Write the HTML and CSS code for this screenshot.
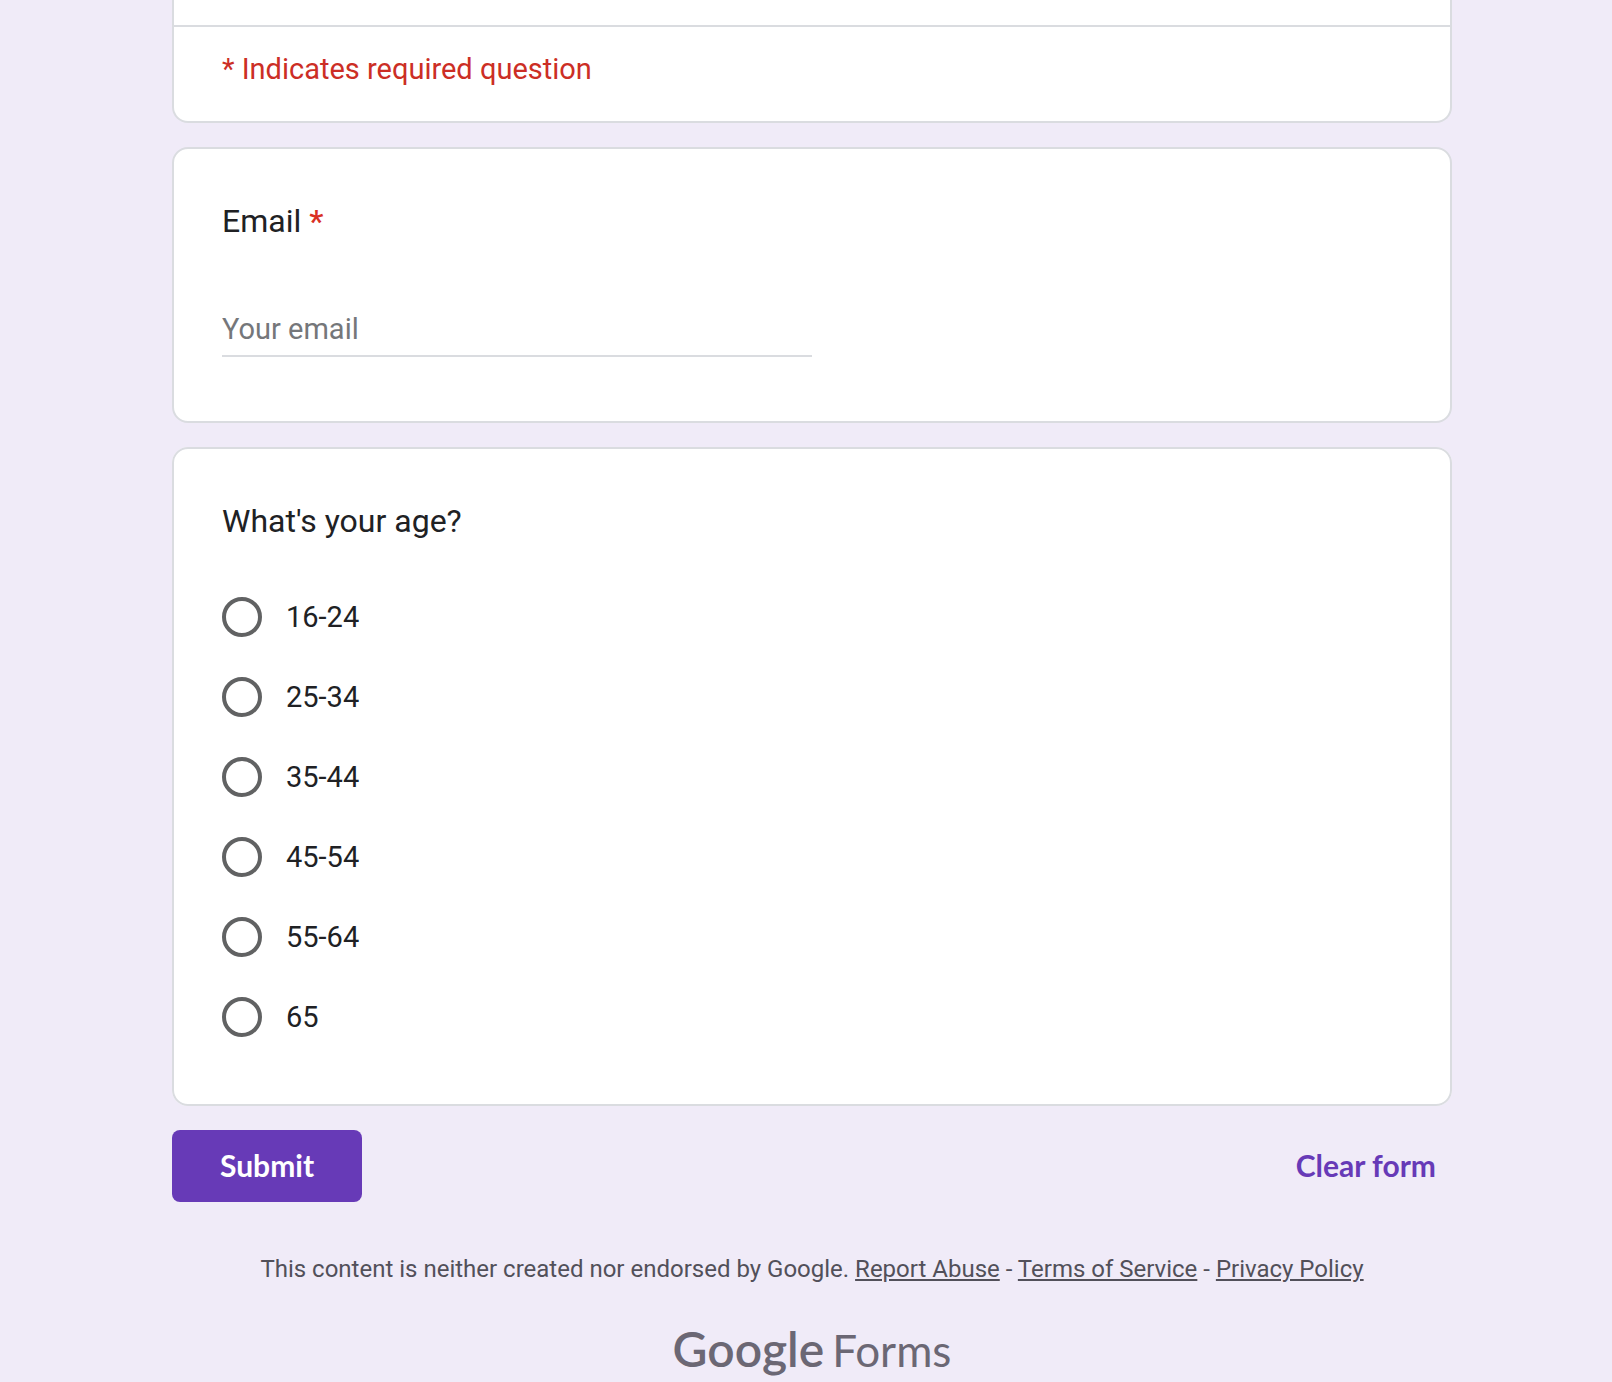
FILE: index.html
```html
<!DOCTYPE html>
<html lang="en">
<head>
  <meta charset="utf-8">
  <meta name="viewport" content="width=device-width, initial-scale=1">
  <title>Google Forms</title>
  <link rel="stylesheet" href="styles.css">
</head>
<body>
  <main class="page">
    <form class="form">
      <section class="card card-header">
        <p class="required-note">* Indicates required question</p>
      </section>

      <section class="card">
        <label class="question" for="email">Email <span class="star">*</span></label>
        <input class="text-input" id="email" type="email" placeholder="Your email" required>
      </section>

      <fieldset class="card">
        <legend class="question">What's your age?</legend>
        <div class="options">
          <label class="option"><input class="radio" type="radio" name="age">16-24</label>
          <label class="option"><input class="radio" type="radio" name="age">25-34</label>
          <label class="option"><input class="radio" type="radio" name="age">35-44</label>
          <label class="option"><input class="radio" type="radio" name="age">45-54</label>
          <label class="option"><input class="radio" type="radio" name="age">55-64</label>
          <label class="option"><input class="radio" type="radio" name="age">65</label>
        </div>
      </fieldset>

      <div class="actions">
        <button class="button button-primary" type="submit">Submit</button>
        <button class="button button-text" type="reset">Clear form</button>
      </div>
    </form>

    <footer class="footer">
      <p class="legal">This content is neither created nor endorsed by Google. <a href="#">Report Abuse</a> - <a href="#">Terms of Service</a> - <a href="#">Privacy Policy</a></p>
      <a class="brand" href="#"><span class="brand-google">Google</span><span class="brand-forms">Forms</span></a>
    </footer>
  </main>
</body>
</html>
```
FILE: styles.css
```css
* {
  box-sizing: border-box;
}

body {
  margin: 0;
  background: #f0ebf8;
  color: #202124;
  font-family: Roboto, sans-serif;
}

.page {
  padding-left: 12px;
}

.form,
.footer {
  max-width: 1280px;
  margin: 0 auto;
}

.form {
  display: flex;
  flex-direction: column;
  gap: 24px;
}

.card {
  min-width: 0;
  margin: 0;
  padding: 48px 48px 46px;
  background: #fff;
  border: 2px solid #dadce0;
  border-radius: 16px;
}

.card-header {
  padding: 0;
  border-top: 0;
  border-radius: 0 0 16px 16px;
}

.required-note {
  margin: 25px 0 0;
  padding: 22px 48px 32px;
  border-top: 2px solid #dadce0;
  color: #cc2e25;
  font-size: 29px;
  line-height: 40px;
}

.question {
  display: block;
  float: left;
  width: 100%;
  padding: 0;
  font-size: 32px;
  line-height: 48px;
}

.star {
  color: #d93025;
  font-weight: 500;
}

.text-input {
  display: block;
  clear: both;
  width: 50%;
  margin: 0 0 18px;
  padding: 64px 0 6px;
  border: 0;
  border-bottom: 2px solid #dadce0;
  outline: 0;
  background: none;
  color: inherit;
  font-family: inherit;
  font-size: 29px;
  line-height: 40px;
}

.text-input::placeholder {
  color: #75777a;
  opacity: 1;
}

.options {
  clear: both;
  display: flex;
  flex-direction: column;
  gap: 40px;
  padding: 52px 0 21px;
}

.option {
  display: flex;
  align-items: center;
  gap: 24px;
  font-size: 29px;
  line-height: 40px;
}

.radio {
  appearance: none;
  width: 40px;
  height: 40px;
  margin: 0;
  border: 4px solid #616263;
  border-radius: 50%;
}

.radio:checked {
  border-color: #673ab7;
  background: radial-gradient(#673ab7 50%, transparent 52%);
}

.actions {
  display: flex;
  align-items: center;
  justify-content: space-between;
}

.button {
  height: 72px;
  border: 0;
  border-radius: 8px;
  font-family: Lato, sans-serif;
  font-size: 30px;
  font-weight: 700;
  cursor: pointer;
}

.button-primary {
  padding: 0 48px 2px;
  background: #673ab7;
  color: #fff;
}

.button-text {
  padding: 0 16px 2px;
  background: none;
  color: #673ab7;
}

.footer {
  padding: 49px 0 0;
  text-align: center;
}

.legal {
  margin: 0 0 36px;
  color: #52505a;
  font-size: 24px;
  line-height: 36px;
}

.legal a {
  color: inherit;
}

.brand {
  display: flex;
  align-items: baseline;
  justify-content: center;
  gap: 8px;
  color: #6b6774;
  font-family: Lato, sans-serif;
  line-height: 52px;
  text-decoration: none;
}

.brand-google {
  font-size: 48px;
  font-weight: 600;
}

.brand-forms {
  font-size: 44px;
}
```
